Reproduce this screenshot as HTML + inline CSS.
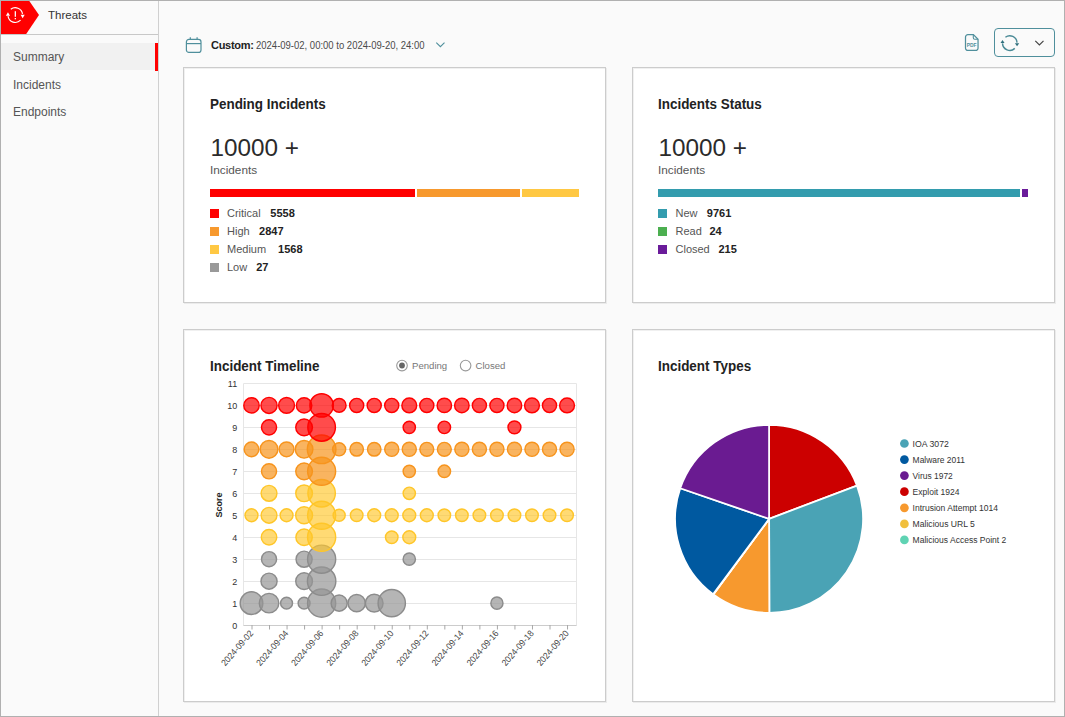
<!DOCTYPE html>
<html><head><meta charset="utf-8">
<style>
*{box-sizing:border-box;margin:0;padding:0}
html,body{width:1065px;height:717px;overflow:hidden;background:#fafafa;font-family:"Liberation Sans",sans-serif;color:#333}
.abs{position:absolute}
.frame{position:absolute;left:0;top:0;width:1065px;height:717px;border:1px solid #b0b0b0;background:#fafafa}
.side{position:absolute;left:1px;top:1px;width:158px;height:715px;border-right:1px solid #d0d0d0;background:#fafafa}
.hdr{position:absolute;left:1px;top:1px;width:157px;height:34px;border-bottom:1px solid #c8c8c8;background:#fafafa}
.nav{position:absolute;left:13px;font-size:12px;color:#555}
.card{position:absolute;background:#fff;border:1px solid #cccccc;box-shadow:1px 1px 0 #ebebeb, inset 1px 1px 0 #f0f0f0}
.title{position:absolute;font-size:14px;font-weight:bold;color:#222;transform-origin:0 0;transform:scaleX(0.96)}
.big{position:absolute;font-size:24.3px;color:#2b2b2b}
.sub{position:absolute;font-size:11px;color:#555;transform-origin:0 0;transform:scaleX(1.07)}
.sq{position:absolute;width:8.5px;height:8.5px}
.lab{position:absolute;font-size:11px;color:#555;white-space:nowrap}
.val{font-weight:bold;color:#222}
svg text{font-family:"Liberation Sans",sans-serif}
</style></head>
<body>
<div class="frame"></div>
<div class="side"></div>
<div class="hdr"></div>
<svg class="abs" style="left:0;top:0" width="160" height="36">
  <polygon points="1,1 29.3,1 39,15.1 26.2,34 1,34" fill="#ff0000"/>
  <g fill="none" stroke="#fff" stroke-width="1.15">
    <path d="M10.78 9.31 A7.35 7.35 0 0 1 22.54 13.82"/>
    <path d="M20.59 20.21 A7.35 7.35 0 0 1 8.02 16.12"/>
  </g>
  <polygon points="20.6,14.7 24.7,14.7 22.65,18.2" fill="#fff"/>
  <polygon points="5.9,15.8 10.0,15.8 7.95,12.2" fill="#fff"/>
  <rect x="14.7" y="11.2" width="1.25" height="5.6" fill="#fff"/>
  <rect x="14.7" y="18" width="1.25" height="1.3" fill="#fff"/>
</svg>
<div class="abs" style="left:48px;top:9px;font-size:11.5px;color:#333">Threats</div>

<div class="abs" style="left:1px;top:43px;width:157px;height:27px;background:#f1f1f1"></div>
<div class="abs" style="left:155px;top:43px;width:3px;height:27.5px;background:#ff0000"></div>
<div class="nav" style="top:50px">Summary</div>
<div class="nav" style="top:78px">Incidents</div>
<div class="nav" style="top:105px">Endpoints</div>

<!-- toolbar -->
<svg class="abs" style="left:184px;top:35px" width="20" height="20">
  <g fill="none" stroke="#4f8f9c" stroke-width="1.2">
    <rect x="2.4" y="4.4" width="14.6" height="13" rx="2.5"/>
    <line x1="2.4" y1="8.6" x2="17" y2="8.6"/>
    <line x1="6.3" y1="2.3" x2="6.3" y2="5"/>
    <line x1="13.1" y1="2.3" x2="13.1" y2="5"/>
  </g>
</svg>
<div class="abs" style="left:211px;top:38px;font-size:11px;letter-spacing:-0.3px;font-weight:bold;color:#222;top:39px">Custom:</div>
<div class="abs" style="left:256px;top:40px;font-size:10px;color:#4a4a4a;transform-origin:0 0;transform:scaleX(0.95)">2024-09-02, 00:00 to 2024-09-20, 24:00</div>
<svg class="abs" style="left:434px;top:40px" width="14" height="10"><path d="M2.3 2.6 L6.4 6.7 L10.5 2.6" fill="none" stroke="#4f8f9c" stroke-width="1.1"/></svg>

<svg class="abs" style="left:962px;top:32px" width="20" height="21">
  <path d="M5.9 2.65 H11.4 L16.05 7.2 V16 A2.4 2.4 0 0 1 13.65 18.45 H5.9 A2.4 2.4 0 0 1 3.5 16 V5.05 A2.4 2.4 0 0 1 5.9 2.65 Z" fill="none" stroke="#4f8f9c" stroke-width="1.25"/>
  <path d="M11.3 2.8 V5.8 A1.5 1.5 0 0 0 12.8 7.3 H16" fill="none" stroke="#4f8f9c" stroke-width="1.1"/>
  <text x="4.8" y="14.8" font-size="6" font-weight="bold" fill="#4f8f9c" textLength="9.8" lengthAdjust="spacingAndGlyphs">PDF</text>
</svg>
<div class="abs" style="left:994px;top:28px;width:61px;height:29px;border:1.2px solid #4f8f9c;border-radius:4px"></div>
<svg class="abs" style="left:998px;top:31px" width="54" height="24">
  <g fill="none" stroke="#4a8a96" stroke-width="1.45">
    <path d="M7.41 6.22 A7.3 7.3 0 0 1 19.05 11.6"/>
    <path d="M16.78 17.39 A7.3 7.3 0 0 1 4.5 12.4"/>
  </g>
  <polygon points="16.9,12.2 21.2,12.2 19.05,15.2" fill="#2f6f7c"/>
  <polygon points="2.5,11.9 6.6,11.9 4.5,8.9" fill="#2f6f7c"/>
  <path d="M37.3 9.8 L41.4 13.9 L45.5 9.8" fill="none" stroke="#444" stroke-width="1.2"/>
</svg>

<!-- cards -->
<div class="card" style="left:183px;top:67px;width:423px;height:236px"></div>
<div class="card" style="left:632px;top:67px;width:423px;height:236px"></div>
<div class="card" style="left:183px;top:329px;width:423px;height:373px"></div>
<div class="card" style="left:632px;top:329px;width:423px;height:373px"></div>

<!-- card 1 -->
<div class="title" style="left:210px;top:96px">Pending Incidents</div>
<div class="big" style="left:210.5px;top:133.5px">10000 +</div>
<div class="sub" style="left:210px;top:164px">Incidents</div>
<div class="abs" style="left:210px;top:189px;width:205.3px;height:8px;background:#ff0000"></div>
<div class="abs" style="left:416.6px;top:189px;width:103.7px;height:8px;background:#f7992e"></div>
<div class="abs" style="left:521.9px;top:189px;width:57.1px;height:8px;background:#ffc843"></div>
<div class="sq" style="left:210px;top:209px;background:#ff0000"></div>
<div class="sq" style="left:210px;top:227px;background:#f7992e"></div>
<div class="sq" style="left:210px;top:245px;background:#ffc843"></div>
<div class="sq" style="left:210px;top:263px;background:#999"></div>
<div class="lab" style="left:227px;top:207px">Critical</div><div class="lab val" style="left:270.3px;top:207px">5558</div>
<div class="lab" style="left:227px;top:225px">High</div><div class="lab val" style="left:259.1px;top:225px">2847</div>
<div class="lab" style="left:227px;top:243px">Medium</div><div class="lab val" style="left:278.1px;top:243px">1568</div>
<div class="lab" style="left:227px;top:260.5px">Low</div><div class="lab val" style="left:256.2px;top:260.5px">27</div>

<!-- card 2 -->
<div class="title" style="left:658px;top:96px">Incidents Status</div>
<div class="big" style="left:658.5px;top:133.5px">10000 +</div>
<div class="sub" style="left:658px;top:164px">Incidents</div>
<div class="abs" style="left:658px;top:189px;width:362px;height:8px;background:#339cae"></div>
<div class="abs" style="left:1021.8px;top:189px;width:6.7px;height:8px;background:#6a1b9a"></div>
<div class="sq" style="left:658px;top:209px;background:#339cae"></div>
<div class="sq" style="left:658px;top:227px;background:#4caf50"></div>
<div class="sq" style="left:658px;top:245px;background:#6a1b9a"></div>
<div class="lab" style="left:675.5px;top:207px">New</div><div class="lab val" style="left:706.8px;top:207px">9761</div>
<div class="lab" style="left:675.5px;top:225px">Read</div><div class="lab val" style="left:709.5px;top:225px">24</div>
<div class="lab" style="left:675.5px;top:243px">Closed</div><div class="lab val" style="left:718.5px;top:243px">215</div>

<!-- card 3 -->
<div class="title" style="left:210px;top:358px">Incident Timeline</div>
<svg class="abs" style="left:0;top:0" width="1065" height="717">
<circle cx="402" cy="365.6" r="5.3" fill="#fff" stroke="#999" stroke-width="1.1"/>
<circle cx="402" cy="365.5" r="2.9" fill="#666"/>
<circle cx="465.6" cy="365.6" r="5.3" fill="#fff" stroke="#999" stroke-width="1.1"/>
<line x1="243.5" y1="625.5" x2="576.5" y2="625.5" stroke="#e6e6e6" stroke-width="1"/>
<line x1="243.5" y1="603.5" x2="576.5" y2="603.5" stroke="#e6e6e6" stroke-width="1"/>
<line x1="243.5" y1="581.5" x2="576.5" y2="581.5" stroke="#e6e6e6" stroke-width="1"/>
<line x1="243.5" y1="559.5" x2="576.5" y2="559.5" stroke="#e6e6e6" stroke-width="1"/>
<line x1="243.5" y1="537.5" x2="576.5" y2="537.5" stroke="#e6e6e6" stroke-width="1"/>
<line x1="243.5" y1="515.5" x2="576.5" y2="515.5" stroke="#e6e6e6" stroke-width="1"/>
<line x1="243.5" y1="493.5" x2="576.5" y2="493.5" stroke="#e6e6e6" stroke-width="1"/>
<line x1="243.5" y1="471.5" x2="576.5" y2="471.5" stroke="#e6e6e6" stroke-width="1"/>
<line x1="243.5" y1="449.5" x2="576.5" y2="449.5" stroke="#e6e6e6" stroke-width="1"/>
<line x1="243.5" y1="427.5" x2="576.5" y2="427.5" stroke="#e6e6e6" stroke-width="1"/>
<line x1="243.5" y1="405.5" x2="576.5" y2="405.5" stroke="#e6e6e6" stroke-width="1"/>
<line x1="243.5" y1="383.5" x2="576.5" y2="383.5" stroke="#e6e6e6" stroke-width="1"/>
<line x1="243.5" y1="383.5" x2="243.5" y2="625.5" stroke="#e6e6e6"/>
<line x1="576.5" y1="383.5" x2="576.5" y2="625.5" stroke="#e6e6e6"/>
<circle cx="251.50" cy="603.13" r="11.30" fill="rgba(150,150,150,0.70)" stroke="#8c8c8c" stroke-width="1.45"/>
<circle cx="269.03" cy="603.13" r="9.75" fill="rgba(150,150,150,0.70)" stroke="#8c8c8c" stroke-width="1.45"/>
<circle cx="286.56" cy="603.13" r="5.95" fill="rgba(150,150,150,0.70)" stroke="#8c8c8c" stroke-width="1.45"/>
<circle cx="304.09" cy="603.13" r="5.95" fill="rgba(150,150,150,0.70)" stroke="#8c8c8c" stroke-width="1.45"/>
<circle cx="321.62" cy="603.13" r="14.05" fill="rgba(150,150,150,0.70)" stroke="#8c8c8c" stroke-width="1.45"/>
<circle cx="339.15" cy="603.13" r="8.05" fill="rgba(150,150,150,0.70)" stroke="#8c8c8c" stroke-width="1.45"/>
<circle cx="356.68" cy="603.13" r="8.65" fill="rgba(150,150,150,0.70)" stroke="#8c8c8c" stroke-width="1.45"/>
<circle cx="374.21" cy="603.13" r="8.85" fill="rgba(150,150,150,0.70)" stroke="#8c8c8c" stroke-width="1.45"/>
<circle cx="391.74" cy="603.13" r="13.65" fill="rgba(150,150,150,0.70)" stroke="#8c8c8c" stroke-width="1.45"/>
<circle cx="496.92" cy="603.13" r="6.05" fill="rgba(150,150,150,0.70)" stroke="#8c8c8c" stroke-width="1.45"/>
<circle cx="269.03" cy="581.16" r="8.05" fill="rgba(150,150,150,0.70)" stroke="#8c8c8c" stroke-width="1.45"/>
<circle cx="304.09" cy="581.16" r="8.35" fill="rgba(150,150,150,0.70)" stroke="#8c8c8c" stroke-width="1.45"/>
<circle cx="321.62" cy="581.16" r="14.20" fill="rgba(150,150,150,0.70)" stroke="#8c8c8c" stroke-width="1.45"/>
<circle cx="269.03" cy="559.19" r="7.55" fill="rgba(150,150,150,0.70)" stroke="#8c8c8c" stroke-width="1.45"/>
<circle cx="304.09" cy="559.19" r="8.05" fill="rgba(150,150,150,0.70)" stroke="#8c8c8c" stroke-width="1.45"/>
<circle cx="321.62" cy="559.19" r="14.05" fill="rgba(150,150,150,0.70)" stroke="#8c8c8c" stroke-width="1.45"/>
<circle cx="409.27" cy="559.19" r="6.15" fill="rgba(150,150,150,0.70)" stroke="#8c8c8c" stroke-width="1.45"/>
<circle cx="269.03" cy="537.22" r="7.70" fill="rgba(255,198,41,0.65)" stroke="#ffc629" stroke-width="1.45"/>
<circle cx="304.09" cy="537.22" r="8.20" fill="rgba(255,198,41,0.65)" stroke="#ffc629" stroke-width="1.45"/>
<circle cx="321.62" cy="537.22" r="14.05" fill="rgba(255,198,41,0.65)" stroke="#ffc629" stroke-width="1.45"/>
<circle cx="391.74" cy="537.22" r="6.25" fill="rgba(255,198,41,0.65)" stroke="#ffc629" stroke-width="1.45"/>
<circle cx="409.27" cy="537.22" r="6.45" fill="rgba(255,198,41,0.65)" stroke="#ffc629" stroke-width="1.45"/>
<circle cx="251.50" cy="515.25" r="6.45" fill="rgba(255,198,41,0.65)" stroke="#ffc629" stroke-width="1.45"/>
<circle cx="269.03" cy="515.25" r="7.90" fill="rgba(255,198,41,0.65)" stroke="#ffc629" stroke-width="1.45"/>
<circle cx="286.56" cy="515.25" r="6.45" fill="rgba(255,198,41,0.65)" stroke="#ffc629" stroke-width="1.45"/>
<circle cx="304.09" cy="515.25" r="8.45" fill="rgba(255,198,41,0.65)" stroke="#ffc629" stroke-width="1.45"/>
<circle cx="321.62" cy="515.25" r="14.05" fill="rgba(255,198,41,0.65)" stroke="#ffc629" stroke-width="1.45"/>
<circle cx="339.15" cy="515.25" r="6.05" fill="rgba(255,198,41,0.65)" stroke="#ffc629" stroke-width="1.45"/>
<circle cx="356.68" cy="515.25" r="6.30" fill="rgba(255,198,41,0.65)" stroke="#ffc629" stroke-width="1.45"/>
<circle cx="374.21" cy="515.25" r="6.45" fill="rgba(255,198,41,0.65)" stroke="#ffc629" stroke-width="1.45"/>
<circle cx="391.74" cy="515.25" r="6.45" fill="rgba(255,198,41,0.65)" stroke="#ffc629" stroke-width="1.45"/>
<circle cx="409.27" cy="515.25" r="6.45" fill="rgba(255,198,41,0.65)" stroke="#ffc629" stroke-width="1.45"/>
<circle cx="426.80" cy="515.25" r="6.45" fill="rgba(255,198,41,0.65)" stroke="#ffc629" stroke-width="1.45"/>
<circle cx="444.33" cy="515.25" r="6.25" fill="rgba(255,198,41,0.65)" stroke="#ffc629" stroke-width="1.45"/>
<circle cx="461.86" cy="515.25" r="6.30" fill="rgba(255,198,41,0.65)" stroke="#ffc629" stroke-width="1.45"/>
<circle cx="479.39" cy="515.25" r="6.30" fill="rgba(255,198,41,0.65)" stroke="#ffc629" stroke-width="1.45"/>
<circle cx="496.92" cy="515.25" r="6.30" fill="rgba(255,198,41,0.65)" stroke="#ffc629" stroke-width="1.45"/>
<circle cx="514.45" cy="515.25" r="6.30" fill="rgba(255,198,41,0.65)" stroke="#ffc629" stroke-width="1.45"/>
<circle cx="531.98" cy="515.25" r="6.30" fill="rgba(255,198,41,0.65)" stroke="#ffc629" stroke-width="1.45"/>
<circle cx="549.51" cy="515.25" r="6.30" fill="rgba(255,198,41,0.65)" stroke="#ffc629" stroke-width="1.45"/>
<circle cx="567.04" cy="515.25" r="6.30" fill="rgba(255,198,41,0.65)" stroke="#ffc629" stroke-width="1.45"/>
<circle cx="269.03" cy="493.28" r="7.90" fill="rgba(255,198,41,0.65)" stroke="#ffc629" stroke-width="1.45"/>
<circle cx="304.09" cy="493.28" r="8.35" fill="rgba(255,198,41,0.65)" stroke="#ffc629" stroke-width="1.45"/>
<circle cx="321.62" cy="493.28" r="13.70" fill="rgba(255,198,41,0.65)" stroke="#ffc629" stroke-width="1.45"/>
<circle cx="409.27" cy="493.28" r="6.15" fill="rgba(255,198,41,0.65)" stroke="#ffc629" stroke-width="1.45"/>
<circle cx="269.03" cy="471.31" r="7.55" fill="rgba(247,148,29,0.70)" stroke="#f7941d" stroke-width="1.45"/>
<circle cx="304.09" cy="471.31" r="8.35" fill="rgba(247,148,29,0.70)" stroke="#f7941d" stroke-width="1.45"/>
<circle cx="321.62" cy="471.31" r="14.00" fill="rgba(247,148,29,0.70)" stroke="#f7941d" stroke-width="1.45"/>
<circle cx="409.27" cy="471.31" r="6.15" fill="rgba(247,148,29,0.70)" stroke="#f7941d" stroke-width="1.45"/>
<circle cx="444.33" cy="471.31" r="6.25" fill="rgba(247,148,29,0.70)" stroke="#f7941d" stroke-width="1.45"/>
<circle cx="251.50" cy="449.34" r="7.35" fill="rgba(247,148,29,0.70)" stroke="#f7941d" stroke-width="1.45"/>
<circle cx="269.03" cy="449.34" r="8.85" fill="rgba(247,148,29,0.70)" stroke="#f7941d" stroke-width="1.45"/>
<circle cx="286.56" cy="449.34" r="7.40" fill="rgba(247,148,29,0.70)" stroke="#f7941d" stroke-width="1.45"/>
<circle cx="304.09" cy="449.34" r="8.80" fill="rgba(247,148,29,0.70)" stroke="#f7941d" stroke-width="1.45"/>
<circle cx="321.62" cy="449.34" r="14.30" fill="rgba(247,148,29,0.70)" stroke="#f7941d" stroke-width="1.45"/>
<circle cx="339.15" cy="449.34" r="6.55" fill="rgba(247,148,29,0.70)" stroke="#f7941d" stroke-width="1.45"/>
<circle cx="356.68" cy="449.34" r="6.75" fill="rgba(247,148,29,0.70)" stroke="#f7941d" stroke-width="1.45"/>
<circle cx="374.21" cy="449.34" r="6.75" fill="rgba(247,148,29,0.70)" stroke="#f7941d" stroke-width="1.45"/>
<circle cx="391.74" cy="449.34" r="7.05" fill="rgba(247,148,29,0.70)" stroke="#f7941d" stroke-width="1.45"/>
<circle cx="409.27" cy="449.34" r="7.05" fill="rgba(247,148,29,0.70)" stroke="#f7941d" stroke-width="1.45"/>
<circle cx="426.80" cy="449.34" r="6.95" fill="rgba(247,148,29,0.70)" stroke="#f7941d" stroke-width="1.45"/>
<circle cx="444.33" cy="449.34" r="6.95" fill="rgba(247,148,29,0.70)" stroke="#f7941d" stroke-width="1.45"/>
<circle cx="461.86" cy="449.34" r="7.05" fill="rgba(247,148,29,0.70)" stroke="#f7941d" stroke-width="1.45"/>
<circle cx="479.39" cy="449.34" r="7.05" fill="rgba(247,148,29,0.70)" stroke="#f7941d" stroke-width="1.45"/>
<circle cx="496.92" cy="449.34" r="7.05" fill="rgba(247,148,29,0.70)" stroke="#f7941d" stroke-width="1.45"/>
<circle cx="514.45" cy="449.34" r="7.05" fill="rgba(247,148,29,0.70)" stroke="#f7941d" stroke-width="1.45"/>
<circle cx="531.98" cy="449.34" r="7.05" fill="rgba(247,148,29,0.70)" stroke="#f7941d" stroke-width="1.45"/>
<circle cx="549.51" cy="449.34" r="7.05" fill="rgba(247,148,29,0.70)" stroke="#f7941d" stroke-width="1.45"/>
<circle cx="567.04" cy="449.34" r="7.05" fill="rgba(247,148,29,0.70)" stroke="#f7941d" stroke-width="1.45"/>
<circle cx="269.03" cy="427.37" r="7.55" fill="rgba(255,0,0,0.70)" stroke="#ff0000" stroke-width="1.45"/>
<circle cx="304.09" cy="427.37" r="8.35" fill="rgba(255,0,0,0.70)" stroke="#ff0000" stroke-width="1.45"/>
<circle cx="321.62" cy="427.37" r="13.80" fill="rgba(255,0,0,0.70)" stroke="#ff0000" stroke-width="1.45"/>
<circle cx="409.27" cy="427.37" r="6.15" fill="rgba(255,0,0,0.70)" stroke="#ff0000" stroke-width="1.45"/>
<circle cx="444.33" cy="427.37" r="6.25" fill="rgba(255,0,0,0.70)" stroke="#ff0000" stroke-width="1.45"/>
<circle cx="514.45" cy="427.37" r="6.45" fill="rgba(255,0,0,0.70)" stroke="#ff0000" stroke-width="1.45"/>
<circle cx="251.50" cy="405.40" r="7.70" fill="rgba(255,0,0,0.70)" stroke="#ff0000" stroke-width="1.45"/>
<circle cx="269.03" cy="405.40" r="8.05" fill="rgba(255,0,0,0.70)" stroke="#ff0000" stroke-width="1.45"/>
<circle cx="286.56" cy="405.40" r="7.90" fill="rgba(255,0,0,0.70)" stroke="#ff0000" stroke-width="1.45"/>
<circle cx="304.09" cy="405.40" r="7.70" fill="rgba(255,0,0,0.70)" stroke="#ff0000" stroke-width="1.45"/>
<circle cx="321.62" cy="405.40" r="11.70" fill="rgba(255,0,0,0.70)" stroke="#ff0000" stroke-width="1.45"/>
<circle cx="339.15" cy="405.40" r="6.90" fill="rgba(255,0,0,0.70)" stroke="#ff0000" stroke-width="1.45"/>
<circle cx="356.68" cy="405.40" r="7.05" fill="rgba(255,0,0,0.70)" stroke="#ff0000" stroke-width="1.45"/>
<circle cx="374.21" cy="405.40" r="7.05" fill="rgba(255,0,0,0.70)" stroke="#ff0000" stroke-width="1.45"/>
<circle cx="391.74" cy="405.40" r="7.05" fill="rgba(255,0,0,0.70)" stroke="#ff0000" stroke-width="1.45"/>
<circle cx="409.27" cy="405.40" r="7.40" fill="rgba(255,0,0,0.70)" stroke="#ff0000" stroke-width="1.45"/>
<circle cx="426.80" cy="405.40" r="7.05" fill="rgba(255,0,0,0.70)" stroke="#ff0000" stroke-width="1.45"/>
<circle cx="444.33" cy="405.40" r="7.20" fill="rgba(255,0,0,0.70)" stroke="#ff0000" stroke-width="1.45"/>
<circle cx="461.86" cy="405.40" r="7.25" fill="rgba(255,0,0,0.70)" stroke="#ff0000" stroke-width="1.45"/>
<circle cx="479.39" cy="405.40" r="7.05" fill="rgba(255,0,0,0.70)" stroke="#ff0000" stroke-width="1.45"/>
<circle cx="496.92" cy="405.40" r="7.05" fill="rgba(255,0,0,0.70)" stroke="#ff0000" stroke-width="1.45"/>
<circle cx="514.45" cy="405.40" r="7.25" fill="rgba(255,0,0,0.70)" stroke="#ff0000" stroke-width="1.45"/>
<circle cx="531.98" cy="405.40" r="7.40" fill="rgba(255,0,0,0.70)" stroke="#ff0000" stroke-width="1.45"/>
<circle cx="549.51" cy="405.40" r="7.05" fill="rgba(255,0,0,0.70)" stroke="#ff0000" stroke-width="1.45"/>
<circle cx="567.04" cy="405.40" r="7.40" fill="rgba(255,0,0,0.70)" stroke="#ff0000" stroke-width="1.45"/>
<line x1="243.5" y1="625.5" x2="576.5" y2="625.5" stroke="#cccccc"/>
<line x1="252.00" y1="625" x2="252.00" y2="629.5" stroke="#a8a8a8"/>
<line x1="269.53" y1="625" x2="269.53" y2="629.5" stroke="#a8a8a8"/>
<line x1="287.06" y1="625" x2="287.06" y2="629.5" stroke="#a8a8a8"/>
<line x1="304.59" y1="625" x2="304.59" y2="629.5" stroke="#a8a8a8"/>
<line x1="322.12" y1="625" x2="322.12" y2="629.5" stroke="#a8a8a8"/>
<line x1="339.65" y1="625" x2="339.65" y2="629.5" stroke="#a8a8a8"/>
<line x1="357.18" y1="625" x2="357.18" y2="629.5" stroke="#a8a8a8"/>
<line x1="374.71" y1="625" x2="374.71" y2="629.5" stroke="#a8a8a8"/>
<line x1="392.24" y1="625" x2="392.24" y2="629.5" stroke="#a8a8a8"/>
<line x1="409.77" y1="625" x2="409.77" y2="629.5" stroke="#a8a8a8"/>
<line x1="427.30" y1="625" x2="427.30" y2="629.5" stroke="#a8a8a8"/>
<line x1="444.83" y1="625" x2="444.83" y2="629.5" stroke="#a8a8a8"/>
<line x1="462.36" y1="625" x2="462.36" y2="629.5" stroke="#a8a8a8"/>
<line x1="479.89" y1="625" x2="479.89" y2="629.5" stroke="#a8a8a8"/>
<line x1="497.42" y1="625" x2="497.42" y2="629.5" stroke="#a8a8a8"/>
<line x1="514.95" y1="625" x2="514.95" y2="629.5" stroke="#a8a8a8"/>
<line x1="532.48" y1="625" x2="532.48" y2="629.5" stroke="#a8a8a8"/>
<line x1="550.01" y1="625" x2="550.01" y2="629.5" stroke="#a8a8a8"/>
<line x1="567.54" y1="625" x2="567.54" y2="629.5" stroke="#a8a8a8"/>
<text x="237.2" y="628.6" text-anchor="end" font-size="9" fill="#333">0</text>
<text x="237.2" y="606.6" text-anchor="end" font-size="9" fill="#333">1</text>
<text x="237.2" y="584.7" text-anchor="end" font-size="9" fill="#333">2</text>
<text x="237.2" y="562.7" text-anchor="end" font-size="9" fill="#333">3</text>
<text x="237.2" y="540.7" text-anchor="end" font-size="9" fill="#333">4</text>
<text x="237.2" y="518.8" text-anchor="end" font-size="9" fill="#333">5</text>
<text x="237.2" y="496.8" text-anchor="end" font-size="9" fill="#333">6</text>
<text x="237.2" y="474.8" text-anchor="end" font-size="9" fill="#333">7</text>
<text x="237.2" y="452.8" text-anchor="end" font-size="9" fill="#333">8</text>
<text x="237.2" y="430.9" text-anchor="end" font-size="9" fill="#333">9</text>
<text x="237.2" y="408.9" text-anchor="end" font-size="9" fill="#333">10</text>
<text x="237.2" y="386.9" text-anchor="end" font-size="9" fill="#333">11</text>
<text x="253.8" y="633.7" text-anchor="end" font-size="9" textLength="43.5" lengthAdjust="spacingAndGlyphs" fill="#444" transform="rotate(-49 253.8 633.7)">2024-09-02</text>
<text x="288.9" y="633.7" text-anchor="end" font-size="9" textLength="43.5" lengthAdjust="spacingAndGlyphs" fill="#444" transform="rotate(-49 288.9 633.7)">2024-09-04</text>
<text x="323.9" y="633.7" text-anchor="end" font-size="9" textLength="43.5" lengthAdjust="spacingAndGlyphs" fill="#444" transform="rotate(-49 323.9 633.7)">2024-09-06</text>
<text x="359.0" y="633.7" text-anchor="end" font-size="9" textLength="43.5" lengthAdjust="spacingAndGlyphs" fill="#444" transform="rotate(-49 359.0 633.7)">2024-09-08</text>
<text x="394.0" y="633.7" text-anchor="end" font-size="9" textLength="43.5" lengthAdjust="spacingAndGlyphs" fill="#444" transform="rotate(-49 394.0 633.7)">2024-09-10</text>
<text x="429.1" y="633.7" text-anchor="end" font-size="9" textLength="43.5" lengthAdjust="spacingAndGlyphs" fill="#444" transform="rotate(-49 429.1 633.7)">2024-09-12</text>
<text x="464.2" y="633.7" text-anchor="end" font-size="9" textLength="43.5" lengthAdjust="spacingAndGlyphs" fill="#444" transform="rotate(-49 464.2 633.7)">2024-09-14</text>
<text x="499.2" y="633.7" text-anchor="end" font-size="9" textLength="43.5" lengthAdjust="spacingAndGlyphs" fill="#444" transform="rotate(-49 499.2 633.7)">2024-09-16</text>
<text x="534.3" y="633.7" text-anchor="end" font-size="9" textLength="43.5" lengthAdjust="spacingAndGlyphs" fill="#444" transform="rotate(-49 534.3 633.7)">2024-09-18</text>
<text x="569.3" y="633.7" text-anchor="end" font-size="9" textLength="43.5" lengthAdjust="spacingAndGlyphs" fill="#444" transform="rotate(-49 569.3 633.7)">2024-09-20</text>
<text x="0" y="0" font-size="9" font-weight="bold" fill="#222" text-anchor="middle" transform="translate(221.8 505) rotate(-90)">Score</text>
<path d="M769.1,518.85 L769.10,424.85 A94.0,94.0 0 0 1 857.01,485.57 Z" fill="#cc0000" stroke="#fff" stroke-width="1.8" stroke-linejoin="round"/>
<path d="M769.1,518.85 L857.01,485.57 A94.0,94.0 0 0 1 769.34,612.85 Z" fill="#4aa3b5" stroke="#fff" stroke-width="1.8" stroke-linejoin="round"/>
<path d="M769.1,518.85 L769.34,612.85 A94.0,94.0 0 0 1 713.37,594.55 Z" fill="#f7992e" stroke="#fff" stroke-width="1.8" stroke-linejoin="round"/>
<path d="M769.1,518.85 L713.37,594.55 A94.0,94.0 0 0 1 713.13,594.37 Z" fill="#f1bf3c" stroke="#fff" stroke-width="1.8" stroke-linejoin="round"/>
<path d="M769.1,518.85 L713.13,594.37 A94.0,94.0 0 0 1 713.04,594.30 Z" fill="#5fd3b3" stroke="#fff" stroke-width="1.8" stroke-linejoin="round"/>
<path d="M769.1,518.85 L713.04,594.30 A94.0,94.0 0 0 1 680.23,488.23 Z" fill="#0059a0" stroke="#fff" stroke-width="1.8" stroke-linejoin="round"/>
<path d="M769.1,518.85 L680.23,488.23 A94.0,94.0 0 0 1 769.10,424.85 Z" fill="#6a1b91" stroke="#fff" stroke-width="1.8" stroke-linejoin="round"/>
<circle cx="904.4" cy="443.5" r="4.35" fill="#4aa3b5"/>
<text x="912.6" y="446.7" font-size="8.9" fill="#333" textLength="36.3" lengthAdjust="spacingAndGlyphs">IOA 3072</text>
<circle cx="904.4" cy="459.6" r="4.35" fill="#0059a0"/>
<text x="912.6" y="462.8" font-size="8.9" fill="#333" textLength="52.4" lengthAdjust="spacingAndGlyphs">Malware 2011</text>
<circle cx="904.4" cy="475.6" r="4.35" fill="#6a1b91"/>
<text x="912.6" y="478.8" font-size="8.9" fill="#333" textLength="40.2" lengthAdjust="spacingAndGlyphs">Virus 1972</text>
<circle cx="904.4" cy="491.7" r="4.35" fill="#cc0000"/>
<text x="912.6" y="494.9" font-size="8.9" fill="#333" textLength="46.9" lengthAdjust="spacingAndGlyphs">Exploit 1924</text>
<circle cx="904.4" cy="507.8" r="4.35" fill="#f7992e"/>
<text x="912.6" y="511.0" font-size="8.9" fill="#333" textLength="85.4" lengthAdjust="spacingAndGlyphs">Intrusion Attempt 1014</text>
<circle cx="904.4" cy="523.9" r="4.35" fill="#f1bf3c"/>
<text x="912.6" y="527.1" font-size="8.9" fill="#333" textLength="62.3" lengthAdjust="spacingAndGlyphs">Malicious URL 5</text>
<circle cx="904.4" cy="539.9" r="4.35" fill="#5fd3b3"/>
<text x="912.6" y="543.1" font-size="8.9" fill="#333" textLength="93.7" lengthAdjust="spacingAndGlyphs">Malicious Access Point 2</text>
</svg>
<div class="abs" style="left:412px;top:360px;font-size:9.6px;color:#777">Pending</div>
<div class="abs" style="left:475.5px;top:360px;font-size:9.6px;color:#777">Closed</div>

<!-- card 4 -->
<div class="title" style="left:658px;top:358px">Incident Types</div>
</body></html>
